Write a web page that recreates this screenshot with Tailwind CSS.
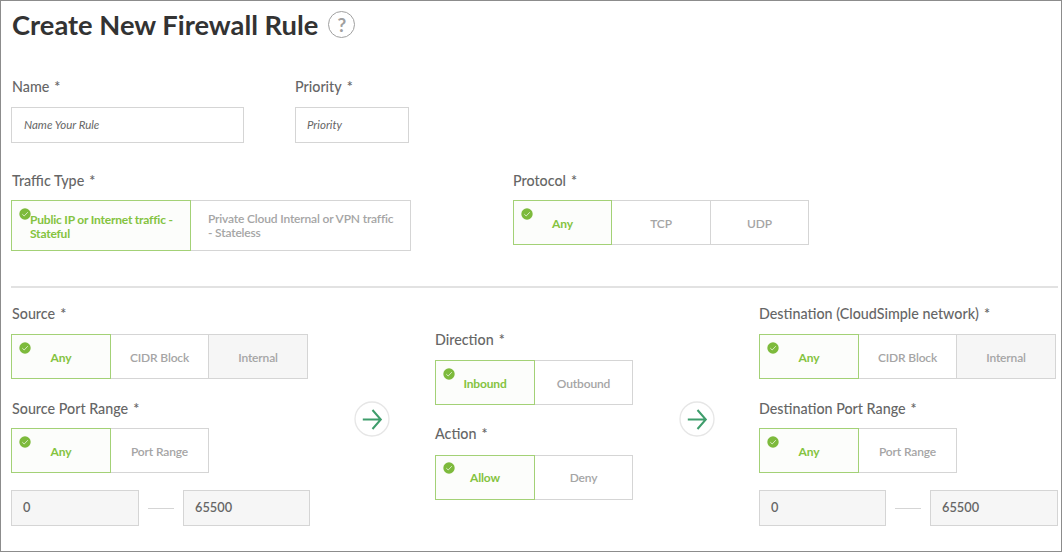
<!DOCTYPE html>
<html lang="en">
<head>
<meta charset="utf-8">
<title>Create New Firewall Rule</title>
<script src="https://cdn.jsdelivr.net/npm/@tailwindcss/browser@4"></script>
</head>
<body class="bg-white font-['Lato',sans-serif] text-[#666]">
<svg class="hidden">
  <symbol id="check" viewBox="0 0 12 12"><circle cx="6" cy="6" r="5.7" fill="#7dba3c"/><path d="M3.3 6.2 5.2 8 8.8 4.2" fill="none" stroke="#d8ebc4" stroke-width="1"/></symbol>
  <symbol id="arrow" viewBox="0 0 36 36"><circle cx="18" cy="18" r="17" fill="#fff" stroke="#e6e6e6" stroke-width="1.3"/><path d="M8.8 18.5H26.8M18.5 9 26.8 18.5 18.5 28" fill="none" stroke="#3f9d6c" stroke-width="2"/></symbol>
</svg>
<main class="h-[552px] w-[1062px] overflow-hidden border border-[#8c8c8c] pl-[10px] pr-[3px]">
  <header class="flex h-[46px] items-center gap-[10px] pl-px">
    <h1 class="pt-px text-[27.3px] font-bold leading-[46px] text-[#333] whitespace-nowrap">Create New Firewall Rule</h1>
    <div class="flex size-[27px] items-center justify-center rounded-full border-[1.5px] border-[#a0a0a0] text-[19px] font-bold leading-none text-[#a0a0a0]">?</div>
  </header>

  <section class="mt-[29px] flex gap-[51px]">
    <div class="w-[233px]">
      <label class="block h-5 pl-px pt-px text-[14.3px] font-medium leading-5">Name<span class="ml-[5px]">*</span></label>
      <div class="mt-[11px] flex h-9 items-center border border-[#d5d5d5] pl-3 text-[11.5px] italic">Name Your Rule</div>
    </div>
    <div class="w-[114px]">
      <label class="block h-5 pt-px text-[14.3px] font-medium leading-5">Priority<span class="ml-[5px]">*</span></label>
      <div class="mt-[11px] flex h-9 items-center border border-[#d5d5d5] pl-[11px] text-[11.5px] italic">Priority</div>
    </div>
  </section>

  <section class="mt-[27px] flex h-[81px] gap-[102px]">
    <div class="w-[400px]">
      <label class="block h-5 pl-px pt-px text-[14.3px] font-medium leading-5">Traffic Type<span class="ml-[5px]">*</span></label>
      <div class="mt-[10px] flex h-[51px] text-[12px] leading-[14px]">
        <div class="relative flex w-[180px] items-center border border-[#a3d176] bg-[#fcfdfb] pl-[18px] pt-0.5 font-bold tracking-[-0.2px] text-[#84c340]"><svg class="absolute left-[7px] top-[7px] size-3"><use href="#check"/></svg><span class="whitespace-nowrap">Public IP or Internet traffic -<br>Stateful</span></div>
        <div class="flex w-[220px] items-center border border-l-0 border-[#d5d5d5] pl-[17px] pt-px font-semibold tracking-[-0.17px] text-[#a5a5a5]"><span class="whitespace-nowrap">Private Cloud Internal or VPN traffic<br>- Stateless</span></div>
      </div>
    </div>
    <div class="w-[296px]">
      <label class="block h-5 pt-px text-[14.3px] font-medium leading-5">Protocol<span class="ml-[5px]">*</span></label>
      <div class="mt-[10px] flex h-[45px] text-[12px] font-semibold tracking-[-0.15px] text-[#a5a5a5]">
        <div class="relative flex w-[99px] items-center justify-center border border-[#a3d176] bg-[#fcfdfb] pt-[3px] font-bold text-[#84c340]"><svg class="absolute left-[7px] top-[7px] size-3"><use href="#check"/></svg>Any</div>
        <div class="flex w-[99px] items-center justify-center border border-l-0 border-[#d5d5d5] pt-[3px]">TCP</div>
        <div class="flex w-[98px] items-center justify-center border border-l-0 border-[#d5d5d5] pt-[3px]">UDP</div>
      </div>
    </div>
  </section>

  <hr class="mt-[35px] h-[2px] border-0 bg-[#e2e2e2]">

  <section class="mt-4 flex">
    <div class="w-[299px]">
      <label class="block h-5 pl-px text-[14.3px] font-medium leading-5">Source<span class="ml-[5px]">*</span></label>
      <div class="mt-[10px] flex h-[45px] text-[12px] font-semibold tracking-[-0.15px] text-[#a5a5a5]">
        <div class="relative flex w-[100px] items-center justify-center border border-[#a3d176] bg-[#fcfdfb] pt-[3px] font-bold text-[#84c340]"><svg class="absolute left-[7px] top-[7px] size-3"><use href="#check"/></svg>Any</div>
        <div class="flex w-[98px] items-center justify-center border border-l-0 border-[#d5d5d5] pt-[3px]">CIDR Block</div>
        <div class="flex w-[99px] items-center justify-center border border-l-0 border-[#d5d5d5] bg-[#f6f6f6] pt-[3px]">Internal</div>
      </div>
      <label class="mt-[19px] block h-5 pl-px pt-px text-[14.3px] font-medium leading-5">Source Port Range<span class="ml-[5px]">*</span></label>
      <div class="mt-[10px] flex h-[45px] text-[12px] font-semibold tracking-[-0.15px] text-[#a5a5a5]">
        <div class="relative flex w-[100px] items-center justify-center border border-[#a3d176] bg-[#fcfdfb] pt-[3px] font-bold text-[#84c340]"><svg class="absolute left-[7px] top-[7px] size-3"><use href="#check"/></svg>Any</div>
        <div class="flex w-[98px] items-center justify-center border border-l-0 border-[#d5d5d5] pt-[3px]">Port Range</div>
      </div>
      <div class="mt-[17px] flex h-9 items-center text-[12.8px] font-semibold">
        <div class="flex h-9 w-32 items-center border border-[#d5d5d5] bg-[#f6f6f6] pb-px pl-[11px]">0</div>
        <div class="mx-[9px] h-px w-[26px] bg-[#d5d5d5]"></div>
        <div class="flex h-9 w-[127px] items-center border border-[#d5d5d5] bg-[#f6f6f6] pb-px pl-[11px]">65500</div>
      </div>
    </div>

    <svg class="ml-[44px] mt-[97px] size-9"><use href="#arrow"/></svg>

    <div class="ml-[45px] mt-[26px] w-[198px]">
      <label class="block h-5 text-[14.3px] font-medium leading-5">Direction<span class="ml-[5px]">*</span></label>
      <div class="mt-[10px] flex h-[45px] text-[12px] font-semibold tracking-[-0.15px] text-[#a5a5a5]">
        <div class="relative flex w-[100px] items-center justify-center border border-[#a3d176] bg-[#fcfdfb] pt-[3px] font-bold text-[#84c340]"><svg class="absolute left-[7px] top-[7px] size-3"><use href="#check"/></svg>Inbound</div>
        <div class="flex w-[98px] items-center justify-center border border-l-0 border-[#d5d5d5] pt-[3px]">Outbound</div>
      </div>
      <label class="mt-[19px] block h-5 text-[14.3px] font-medium leading-5">Action<span class="ml-[5px]">*</span></label>
      <div class="mt-[11px] flex h-[45px] text-[12px] font-semibold tracking-[-0.15px] text-[#a5a5a5]">
        <div class="relative flex w-[100px] items-center justify-center border border-[#a3d176] bg-[#fcfdfb] pt-px font-bold text-[#84c340]"><svg class="absolute left-[7px] top-[6px] size-3"><use href="#check"/></svg>Allow</div>
        <div class="flex w-[98px] items-center justify-center border border-l-0 border-[#d5d5d5] pt-px">Deny</div>
      </div>
    </div>

    <svg class="ml-[46px] mt-[97px] size-9"><use href="#arrow"/></svg>

    <div class="ml-[44px] w-[299px]">
      <label class="block h-5 whitespace-nowrap text-[14.3px] font-medium leading-5">Destination (CloudSimple network)<span class="ml-[5px]">*</span></label>
      <div class="mt-[10px] flex h-[45px] text-[12px] font-semibold tracking-[-0.15px] text-[#a5a5a5]">
        <div class="relative flex w-[100px] items-center justify-center border border-[#a3d176] bg-[#fcfdfb] pt-[3px] font-bold text-[#84c340]"><svg class="absolute left-[7px] top-[7px] size-3"><use href="#check"/></svg>Any</div>
        <div class="flex w-[98px] items-center justify-center border border-l-0 border-[#d5d5d5] pt-[3px]">CIDR Block</div>
        <div class="flex w-[99px] items-center justify-center border border-l-0 border-[#d5d5d5] bg-[#f6f6f6] pt-[3px]">Internal</div>
      </div>
      <label class="mt-[19px] block h-5 pt-px text-[14.3px] font-medium leading-5">Destination Port Range<span class="ml-[5px]">*</span></label>
      <div class="mt-[10px] flex h-[45px] text-[12px] font-semibold tracking-[-0.15px] text-[#a5a5a5]">
        <div class="relative flex w-[100px] items-center justify-center border border-[#a3d176] bg-[#fcfdfb] pt-[3px] font-bold text-[#84c340]"><svg class="absolute left-[7px] top-[7px] size-3"><use href="#check"/></svg>Any</div>
        <div class="flex w-[98px] items-center justify-center border border-l-0 border-[#d5d5d5] pt-[3px]">Port Range</div>
      </div>
      <div class="mt-[17px] flex h-9 items-center text-[12.8px] font-semibold">
        <div class="flex h-9 w-[127px] items-center border border-[#d5d5d5] bg-[#f6f6f6] pb-px pl-[11px]">0</div>
        <div class="mx-[9px] h-px w-[26px] bg-[#d5d5d5]"></div>
        <div class="flex h-9 w-32 items-center border border-[#d5d5d5] bg-[#f6f6f6] pb-px pl-[11px]">65500</div>
      </div>
    </div>
  </section>
</main>
</body>
</html>
